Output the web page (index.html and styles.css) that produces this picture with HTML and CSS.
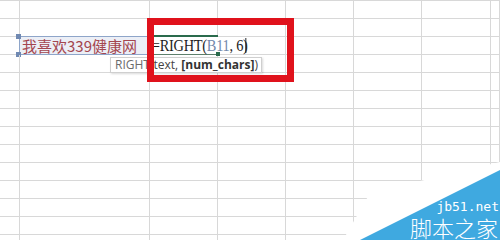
FILE: index.html
```html
<!DOCTYPE html>
<html lang="zh">
<head>
<meta charset="utf-8">
<title>RIGHT</title>
<link rel="stylesheet" href="styles.css">
</head>
<body>
<div class="sheet">
  <div class="grid">
    <span></span><span></span><span></span><span></span><span></span><span></span><span></span><span></span>
    <span></span><span></span><span></span><span></span><span></span><span></span><span></span><span></span>
    <span></span>
    <span class="ref"><i class="handle h-top"></i><i class="handle h-bottom"></i>我喜欢339健康网</span>
    <span class="editing"><span class="formula">=RIGHT(<span class="arg">B11</span>, 6)<span class="caret"></span></span><i class="fill-handle"></i></span>
    <span></span><span></span><span></span><span></span><span></span>
    <span></span><span></span><span></span><span></span><span></span><span></span><span></span><span></span>
    <span></span><span></span><span></span><span></span><span></span><span></span><span></span><span></span>
    <span></span><span></span><span></span><span></span><span></span><span></span><span></span><span></span>
    <span></span><span></span><span></span><span></span><span></span><span></span><span></span><span></span>
    <span></span><span></span><span></span><span></span><span></span><span></span><span></span><span></span>
    <span></span><span></span><span></span><span></span><span></span><span></span><span></span><span></span>
    <span></span><span></span><span></span><span></span><span></span><span></span><span></span><span></span>
    <span></span><span></span><span></span><span></span><span></span><span></span><span></span><span></span>
    <span></span><span></span><span></span><span></span><span></span><span></span><span></span><span></span>
    <span></span><span></span><span></span><span></span><span></span><span></span><span></span><span></span>
    <span></span><span></span><span></span><span></span><span></span><span></span><span></span><span></span>
  </div>

  <div class="tooltip"><span class="fn">RIGHT</span>(text, <b>[num_chars]</b>)</div>

  <div class="highlight"></div>

  <div class="watermark">
    <svg class="wm-shape" width="170" height="80" viewBox="0 0 170 80">
      <polygon points="13,80 40,33 170,2 170,80" fill="#ffffff"/>
      <polygon points="30,80 170,10 170,80" fill="#3fa9e0"/>
    </svg>
    <div class="wm-text">
      <span class="wm-url">jb51.net</span>
      <span class="wm-name">脚本之家</span>
    </div>
  </div>
</div>
</body>
</html>
```
FILE: styles.css
```css
html, body {
  margin: 0;
  padding: 0;
  background: #ffffff;
}

.sheet {
  position: relative;
  width: 500px;
  height: 240px;
  overflow: hidden;
  background: #ffffff;
}

.grid {
  display: grid;
  grid-template-columns: 20px 130px 68px 68px 68px 68px 69px 1fr;
  grid-auto-rows: 18px;
  border-top: 1px solid #d8d8d8;
}

.grid > span {
  box-sizing: border-box;
  border-right: 1px solid #d8d8d8;
  border-bottom: 1px solid #d8d8d8;
  position: relative;
}

.grid > .ref {
  background: #eceff6;
  color: #a4464f;
  font-family: "Noto Sans CJK SC", "Noto Sans", sans-serif;
  font-size: 15px;
  line-height: 17px;
  padding-left: 2px;
  white-space: nowrap;
  border-bottom-color: #8ea5c9;
  box-shadow: -1px -1px 0 #8ea5c9;
}

.handle {
  position: absolute;
  left: -4px;
  width: 5px;
  height: 5px;
  background: #7089b2;
}

.h-top { top: -3px; }
.h-bottom { bottom: -3px; }

.grid > .editing {
  border-right-color: transparent;
  border-bottom-color: #5d7f6c;
  box-shadow: 0 -2px 0 #2a6b4c;
  overflow: visible;
  z-index: 1;
}

.formula {
  display: inline-block;
  white-space: nowrap;
  font-family: "Liberation Serif", "Times New Roman", serif;
  font-size: 16px;
  line-height: 17px;
  color: #1e1e1e;
  padding-left: 2px;
  letter-spacing: -0.3px;
  transform: scaleX(0.9);
  transform-origin: left center;
}

.arg {
  color: #7389ab;
}

.caret {
  display: inline-block;
  width: 1px;
  height: 15px;
  background: #111;
  vertical-align: -2px;
  margin-left: -2px;
}

.fill-handle {
  position: absolute;
  right: -3px;
  bottom: -2px;
  width: 4px;
  height: 4px;
  background: #2a6b4c;
}

.tooltip {
  position: absolute;
  left: 110px;
  top: 57px;
  width: 152px;
  height: 16px;
  box-sizing: border-box;
  border: 1px solid #cfcfcf;
  background: #ffffff;
  box-shadow: 1px 1px 2px rgba(0, 0, 0, 0.15);
  font-family: "Open Sans", "Liberation Sans", sans-serif;
  font-size: 12px;
  line-height: 14px;
  color: #444;
  padding-left: 4px;
  white-space: nowrap;
  z-index: 2;
}

.tooltip .fn {
  color: #6b6b6b;
}

.tooltip b {
  color: #333;
}

.highlight {
  position: absolute;
  left: 147px;
  top: 18px;
  width: 147px;
  height: 64px;
  box-sizing: border-box;
  border: 7px solid #e0121c;
  z-index: 3;
}

.watermark {
  position: absolute;
  right: 0;
  bottom: 0;
  width: 170px;
  height: 80px;
  z-index: 4;
}

.wm-shape {
  position: absolute;
  left: 0;
  top: 0;
  display: block;
}

.wm-text {
  position: absolute;
  right: 0;
  bottom: 0;
  display: flex;
  flex-direction: column;
  align-items: flex-end;
  color: #ffffff;
}

.wm-url {
  font-family: "DejaVu Sans Mono", "Liberation Mono", monospace;
  font-size: 13px;
  line-height: 15px;
  margin-right: 1px;
}

.wm-name {
  font-family: "Noto Sans CJK SC", sans-serif;
  font-weight: 300;
  font-size: 22px;
  line-height: 26px;
  margin-right: 2px;
}
```
